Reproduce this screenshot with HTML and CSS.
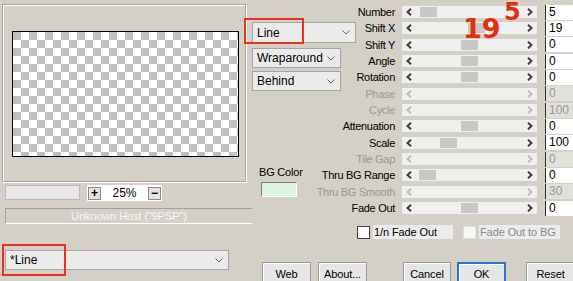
FILE: index.html
```html
<!DOCTYPE html>
<html lang="en">
<head>
    <meta charset="UTF-8">
    <title>Tile Settings</title>
    <link rel="stylesheet" href="styles.css">
</head>
<body>
    <div class="dialog">
        <div class="left">
            <div class="group">
                <div class="preview"></div>
            </div>
            <div class="zoom-row">
                <div class="zoom-bar"></div>
                <div class="zoom-box">
                    <span class="zbtn">+</span>
                    <span class="zval">25%</span>
                    <span class="zbtn">&minus;</span>
                </div>
            </div>
            <div class="host">Unknown Host ("9PSP")</div>
            <div class="select preset">
                <span>*Line</span>
                <svg class="chev" width="8" height="5" viewBox="0 0 8 5"><polyline points="0.5,0.5 4,4 7.5,0.5"/></svg>
            </div>
        </div>

        <div class="right">
            <div class="params">
                <div class="middle">
                    <div class="select sel-line">
                        <span>Line</span>
                        <svg class="chev" width="8" height="5" viewBox="0 0 8 5"><polyline points="0.5,0.5 4,4 7.5,0.5"/></svg>
                    </div>
                    <div class="select sel-small sel-wrap">
                        <span>Wraparound</span>
                        <svg class="chev" width="8" height="5" viewBox="0 0 8 5"><polyline points="0.5,0.5 4,4 7.5,0.5"/></svg>
                    </div>
                    <div class="select sel-small sel-behind">
                        <span>Behind</span>
                        <svg class="chev" width="8" height="5" viewBox="0 0 8 5"><polyline points="0.5,0.5 4,4 7.5,0.5"/></svg>
                    </div>
                    <div class="bg-label">BG Color</div>
                    <div class="swatch"></div>
                </div>

                <div class="rows">
                    <div class="row">
                        <div class="label">Number</div>
                        <div class="slider"><svg class="arr" viewBox="0 0 6 8"><polyline points="5,0.8 1.5,4 5,7.2"/></svg><span class="thumb" style="left:18px"></span><svg class="arr" viewBox="0 0 6 8"><polyline points="1,0.8 4.5,4 1,7.2"/></svg></div>
                        <div class="value">5</div>
                    </div>
                    <div class="row">
                        <div class="label">Shift X</div>
                        <div class="slider"><svg class="arr" viewBox="0 0 6 8"><polyline points="5,0.8 1.5,4 5,7.2"/></svg><span class="thumb" style="left:66px"></span><svg class="arr" viewBox="0 0 6 8"><polyline points="1,0.8 4.5,4 1,7.2"/></svg></div>
                        <div class="value">19</div>
                    </div>
                    <div class="row">
                        <div class="label">Shift Y</div>
                        <div class="slider"><svg class="arr" viewBox="0 0 6 8"><polyline points="5,0.8 1.5,4 5,7.2"/></svg><span class="thumb" style="left:59px"></span><svg class="arr" viewBox="0 0 6 8"><polyline points="1,0.8 4.5,4 1,7.2"/></svg></div>
                        <div class="value">0</div>
                    </div>
                    <div class="row">
                        <div class="label">Angle</div>
                        <div class="slider"><svg class="arr" viewBox="0 0 6 8"><polyline points="5,0.8 1.5,4 5,7.2"/></svg><span class="thumb" style="left:59px"></span><svg class="arr" viewBox="0 0 6 8"><polyline points="1,0.8 4.5,4 1,7.2"/></svg></div>
                        <div class="value">0</div>
                    </div>
                    <div class="row">
                        <div class="label">Rotation</div>
                        <div class="slider"><svg class="arr" viewBox="0 0 6 8"><polyline points="5,0.8 1.5,4 5,7.2"/></svg><span class="thumb" style="left:59px"></span><svg class="arr" viewBox="0 0 6 8"><polyline points="1,0.8 4.5,4 1,7.2"/></svg></div>
                        <div class="value">0</div>
                    </div>
                    <div class="row off">
                        <div class="label">Phase</div>
                        <div class="slider"><svg class="arr" viewBox="0 0 6 8"><polyline points="5,0.8 1.5,4 5,7.2"/></svg><svg class="arr" viewBox="0 0 6 8"><polyline points="1,0.8 4.5,4 1,7.2"/></svg></div>
                        <div class="value">0</div>
                    </div>
                    <div class="row off">
                        <div class="label">Cycle</div>
                        <div class="slider"><svg class="arr" viewBox="0 0 6 8"><polyline points="5,0.8 1.5,4 5,7.2"/></svg><svg class="arr" viewBox="0 0 6 8"><polyline points="1,0.8 4.5,4 1,7.2"/></svg></div>
                        <div class="value">100</div>
                    </div>
                    <div class="row">
                        <div class="label">Attenuation</div>
                        <div class="slider"><svg class="arr" viewBox="0 0 6 8"><polyline points="5,0.8 1.5,4 5,7.2"/></svg><span class="thumb" style="left:59px"></span><svg class="arr" viewBox="0 0 6 8"><polyline points="1,0.8 4.5,4 1,7.2"/></svg></div>
                        <div class="value">0</div>
                    </div>
                    <div class="row">
                        <div class="label">Scale</div>
                        <div class="slider"><svg class="arr" viewBox="0 0 6 8"><polyline points="5,0.8 1.5,4 5,7.2"/></svg><span class="thumb" style="left:38px"></span><svg class="arr" viewBox="0 0 6 8"><polyline points="1,0.8 4.5,4 1,7.2"/></svg></div>
                        <div class="value">100</div>
                    </div>
                    <div class="row off">
                        <div class="label">Tile Gap</div>
                        <div class="slider"><svg class="arr" viewBox="0 0 6 8"><polyline points="5,0.8 1.5,4 5,7.2"/></svg><svg class="arr" viewBox="0 0 6 8"><polyline points="1,0.8 4.5,4 1,7.2"/></svg></div>
                        <div class="value">0</div>
                    </div>
                    <div class="row">
                        <div class="label">Thru BG Range</div>
                        <div class="slider"><svg class="arr" viewBox="0 0 6 8"><polyline points="5,0.8 1.5,4 5,7.2"/></svg><span class="thumb" style="left:17px"></span><svg class="arr" viewBox="0 0 6 8"><polyline points="1,0.8 4.5,4 1,7.2"/></svg></div>
                        <div class="value">0</div>
                    </div>
                    <div class="row off">
                        <div class="label">Thru BG Smooth</div>
                        <div class="slider"><svg class="arr" viewBox="0 0 6 8"><polyline points="5,0.8 1.5,4 5,7.2"/></svg><svg class="arr" viewBox="0 0 6 8"><polyline points="1,0.8 4.5,4 1,7.2"/></svg></div>
                        <div class="value">30</div>
                    </div>
                    <div class="row">
                        <div class="label">Fade Out</div>
                        <div class="slider"><svg class="arr" viewBox="0 0 6 8"><polyline points="5,0.8 1.5,4 5,7.2"/></svg><span class="thumb" style="left:59px"></span><svg class="arr" viewBox="0 0 6 8"><polyline points="1,0.8 4.5,4 1,7.2"/></svg></div>
                        <div class="value">0</div>
                    </div>
                </div>
            </div>

            <div class="checks">
                <div class="check">
                    <span class="box"></span>
                    <span class="check-label">1/n Fade Out</span>
                </div>
                <div class="check disabled">
                    <span class="box"></span>
                    <span class="check-label">Fade Out to BG</span>
                </div>
            </div>

            <div class="buttons">
                <div class="btn">Web</div>
                <div class="btn">About...</div>
                <div class="btn btn-cancel">Cancel</div>
                <div class="btn btn-ok">OK</div>
                <div class="btn btn-reset">Reset</div>
            </div>
        </div>
    </div>

    <div class="mark mark-line"></div>
    <div class="mark mark-preset"></div>
    <div class="note note-5">5</div>
    <div class="note note-19">19</div>
</body>
</html>
```

FILE: styles.css
```css
body {
    margin: 0;
    width: 573px;
    height: 281px;
    overflow: hidden;
    position: relative;
    background: #d4d0c8;
    font-family: "Liberation Sans", Arial, sans-serif;
    font-size: 11px;
    color: #000;
}
.dialog {
    display: flex;
}

/* left side */
.left {
    width: 252px;
    flex-shrink: 0;
    display: flex;
    flex-direction: column;
}
.group {
    margin: 4px 0 0 2px;
    width: 244px;
    height: 178px;
    box-sizing: border-box;
    border: 1px solid #a9a59d;
    box-shadow: inset 1px 1px #fff, 1px 1px #fff;
    padding: 26px 0 0 9px;
}
.preview {
    width: 227px;
    height: 126px;
    box-sizing: border-box;
    border: 1px solid #000;
    background: repeating-conic-gradient(#c0c0c0 0 25%, #fff 0 50%) 8px 0 / 16px 16px;
}
.zoom-row {
    display: flex;
    gap: 7px;
    margin: 3px 0 0 5px;
    height: 16px;
}
.zoom-bar {
    width: 75px;
    height: 15px;
    box-sizing: border-box;
    background: #e8e8e8;
    border: 1px solid #bdbab4;
}
.zoom-box {
    width: 75px;
    height: 16px;
    box-sizing: border-box;
    background: #fff;
    display: flex;
    align-items: center;
    padding: 0 1px;
}
.zbtn {
    width: 13px;
    height: 13px;
    box-sizing: border-box;
    border: 1px solid #8c8c8c;
    background: #e4e4e4;
    font-weight: bold;
    font-size: 12px;
    line-height: 11px;
    text-align: center;
}
.zval {
    flex: 1;
    text-align: center;
    font-size: 12px;
}
.host {
    margin: 7px 0 0 5px;
    width: 247px;
    height: 16px;
    box-sizing: border-box;
    border-top: 1px solid #a0a0a0;
    border-left: 1px solid #a0a0a0;
    border-bottom: 1px solid #fff;
    color: #f6f6f6;
    text-align: center;
    line-height: 14px;
    letter-spacing: -0.1px;
}
.select {
    display: flex;
    align-items: center;
    justify-content: space-between;
    box-sizing: border-box;
    background: #ebebeb;
    border: 1px solid #a5a5a5;
    padding: 0 5px 0 4px;
    font-size: 12px;
}
.chev polyline {
    fill: none;
    stroke: #666;
    stroke-width: 1;
}
.preset {
    margin: 26px 0 0 5px;
    width: 224px;
    height: 20px;
}

/* right side */
.right {
    flex: 1;
    display: flex;
    flex-direction: column;
}
.params {
    display: grid;
    margin-top: 4px;
}
.middle,
.rows {
    grid-area: 1 / 1;
}
.middle {
    display: flex;
    flex-direction: column;
    align-items: flex-start;
}
.sel-line {
    margin-top: 18px;
    width: 104px;
    height: 21px;
}
.sel-small {
    width: 89px;
    height: 20px;
}
.sel-wrap {
    margin-top: 5px;
}
.sel-behind {
    margin-top: 3px;
}
.bg-label {
    margin: 75px 0 0 7px;
    line-height: 12px;
    letter-spacing: -0.2px;
}
.swatch {
    margin: 4px 0 0 9px;
    width: 36px;
    height: 15px;
    box-sizing: border-box;
    background: #dcf3e0;
    border-top: 1px solid #808080;
    border-left: 1px solid #808080;
    border-right: 1px solid #fff;
    border-bottom: 1px solid #fff;
}
.rows {
    display: flex;
    flex-direction: column;
}
.row {
    display: flex;
    align-items: center;
    height: 16.33px;
}
.label {
    width: 150px;
    flex-shrink: 0;
    box-sizing: border-box;
    padding-right: 7px;
    text-align: right;
    white-space: nowrap;
    letter-spacing: -0.3px;
}
.slider {
    position: relative;
    width: 135px;
    height: 12px;
    margin-right: 8px;
    flex-shrink: 0;
    box-sizing: border-box;
    background: #efefef;
    display: flex;
    align-items: center;
    justify-content: space-between;
    padding: 0 4px;
}
.arr {
    width: 6px;
    height: 8px;
}
.arr polyline {
    fill: none;
    stroke: #3a3a3a;
    stroke-width: 1.9;
}
.thumb {
    position: absolute;
    top: 1px;
    width: 17px;
    height: 10px;
    background: #c8c8c8;
}
.value {
    flex: 1;
    height: 15px;
    box-sizing: border-box;
    background: #fff;
    border-left: 1px solid #303030;
    padding-left: 3px;
    line-height: 15px;
    font-size: 12px;
}
.off .label,
.off .value {
    color: #999;
}
.off .arr polyline {
    stroke: #bcbcbc;
}
.off .value {
    background: #e2e0db;
}

.checks {
    display: flex;
    align-items: center;
    gap: 10px;
    margin: 9px 0 0 105px;
    height: 14px;
}
.check {
    display: flex;
    align-items: center;
    gap: 3px;
}
.box {
    width: 13px;
    height: 13px;
    box-sizing: border-box;
    background: #fff;
    border: 1px solid #404040;
}
.check-label {
    width: 80px;
    height: 14px;
    box-sizing: border-box;
    padding-left: 1px;
    line-height: 14px;
    background: #ebebeb;
    letter-spacing: -0.1px;
}
.disabled .box {
    background: #f6f6f6;
    border-color: #e0e0e0;
}
.disabled .check-label {
    color: #8a8a8a;
    width: 81px;
}

.buttons {
    display: flex;
    margin: 23px 0 0 10px;
}
.btn {
    width: 49px;
    height: 24px;
    box-sizing: border-box;
    background: #e6e6e6;
    border: 1px solid #9a9a9a;
    box-shadow: inset 1px 1px #fff;
    text-align: center;
    line-height: 22px;
    margin-right: 7px;
    letter-spacing: -0.1px;
}
.btn-cancel {
    margin-left: 29px;
    margin-right: 6px;
    width: 48px;
}
.btn-ok {
    border: 2px solid #2f74c8;
    line-height: 20px;
    margin-right: 20px;
}

/* annotations */
.mark {
    position: absolute;
    box-sizing: border-box;
    border: 2px solid #e8321c;
}
.mark-line {
    left: 244px;
    top: 18px;
    width: 60px;
    height: 26px;
}
.mark-preset {
    left: 2px;
    top: 244px;
    width: 64px;
    height: 32px;
}
.note {
    position: absolute;
    font-family: "DejaVu Sans", sans-serif;
    font-weight: bold;
    color: #e2300e;
    line-height: 24px;
}
.note-5 {
    left: 504px;
    top: 0;
    font-size: 24px;
}
.note-19 {
    left: 463px;
    top: 17px;
    font-size: 27px;
}
```
